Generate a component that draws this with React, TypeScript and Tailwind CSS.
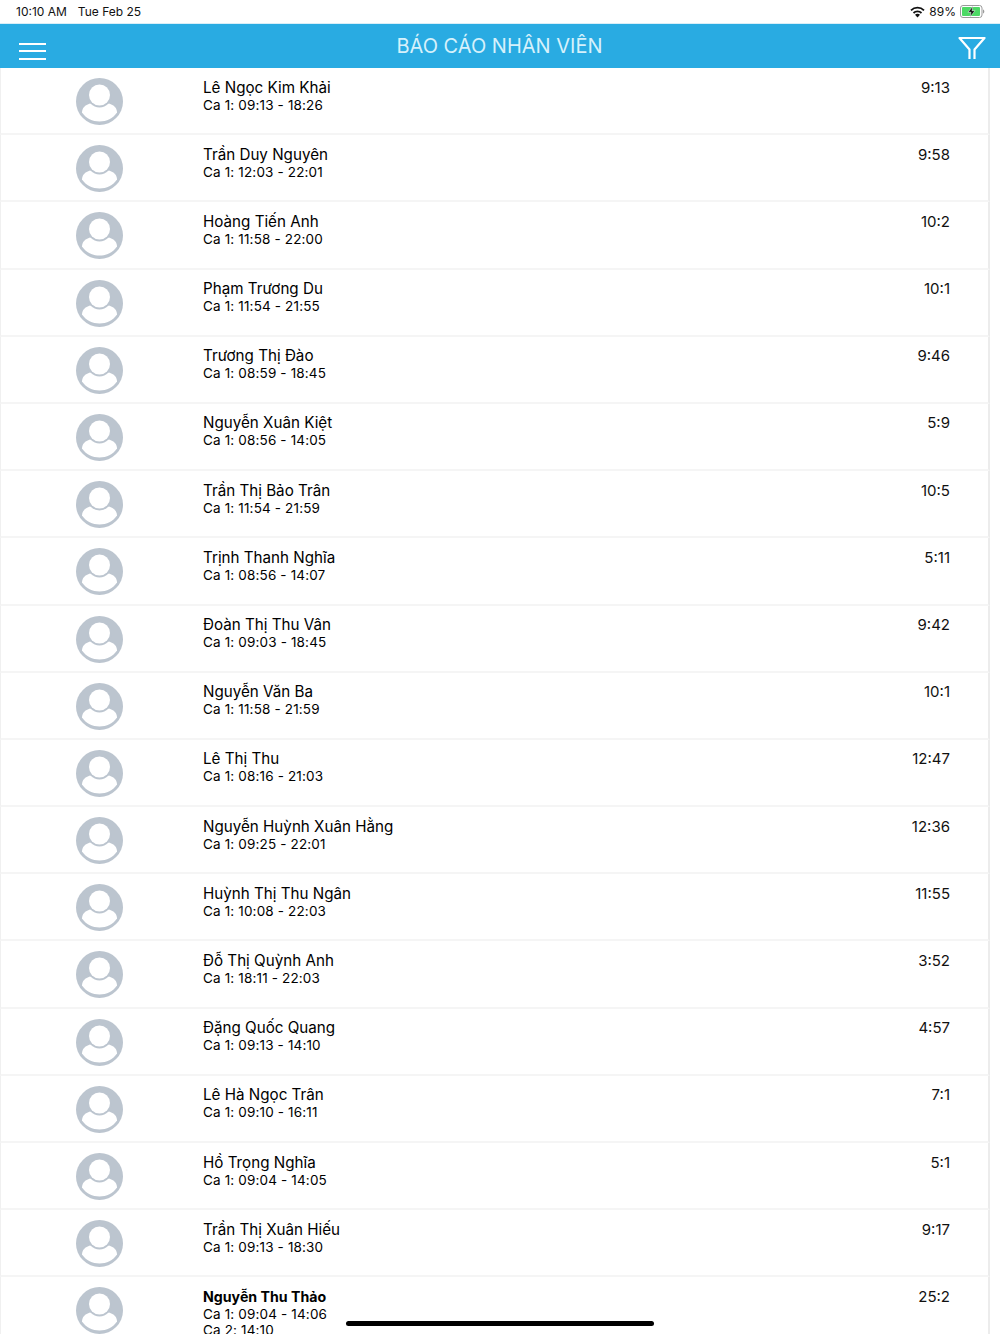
const rows: [string, string, string][] = [
  ["Lê Ngọc Kim Khải", "Ca 1: 09:13 - 18:26", "9:13"],
  ["Trần Duy Nguyên", "Ca 1: 12:03 - 22:01", "9:58"],
  ["Hoàng Tiến Anh", "Ca 1: 11:58 - 22:00", "10:2"],
  ["Phạm Trương Du", "Ca 1: 11:54 - 21:55", "10:1"],
  ["Trương Thị Đào", "Ca 1: 08:59 - 18:45", "9:46"],
  ["Nguyễn Xuân Kiệt", "Ca 1: 08:56 - 14:05", "5:9"],
  ["Trần Thị Bảo Trân", "Ca 1: 11:54 - 21:59", "10:5"],
  ["Trịnh Thanh Nghĩa", "Ca 1: 08:56 - 14:07", "5:11"],
  ["Đoàn Thị Thu Vân", "Ca 1: 09:03 - 18:45", "9:42"],
  ["Nguyễn Văn Ba", "Ca 1: 11:58 - 21:59", "10:1"],
  ["Lê Thị Thu", "Ca 1: 08:16 - 21:03", "12:47"],
  ["Nguyễn Huỳnh Xuân Hằng", "Ca 1: 09:25 - 22:01", "12:36"],
  ["Huỳnh Thị Thu Ngân", "Ca 1: 10:08 - 22:03", "11:55"],
  ["Đỗ Thị Quỳnh Anh", "Ca 1: 18:11 - 22:03", "3:52"],
  ["Đặng Quốc Quang", "Ca 1: 09:13 - 14:10", "4:57"],
  ["Lê Hà Ngọc Trân", "Ca 1: 09:10 - 16:11", "7:1"],
  ["Hồ Trọng Nghĩa", "Ca 1: 09:04 - 14:05", "5:1"],
  ["Trần Thị Xuân Hiếu", "Ca 1: 09:13 - 18:30", "9:17"],
];

function Avatar() {
  return (
    <svg width="47" height="47" viewBox="0 0 47 47" className="block shrink-0">
      <circle cx="23.5" cy="23.5" r="23.5" fill="#bcc5cf" />
      <path d="M6 34.500C6 30 9 27 14 25.500C18 24.500 29 24.500 33 25.500C38 27 41 30 41 34.500C37 40.500 30.500 43.500 23.500 43.500C16.500 43.500 10 40.500 6 34.500Z" fill="#fff" />
      <circle cx="23.5" cy="17" r="12.5" fill="#bcc5cf" />
      <circle cx="23.5" cy="17" r="10.5" fill="#fff" />
    </svg>
  );
}

function Row({ name, lines, time, bold }: { name: string; lines: string[]; time: string; bold?: boolean }) {
  return (
    <div className="mr-[10px] flex h-[67.2px] shrink-0 border-b-2 border-r-2 border-l border-[#f5f5f5] border-r-[#ececec] border-l-[#f0f0f0]">
      <div className="w-[202px] shrink-0 pl-[75px] pt-[10px]">
        <Avatar />
      </div>
      <div className="flex-1 pt-[10.5px] text-black">
        <div className={`leading-[18px] ${bold ? "text-[14.2px] font-bold" : "text-[15.2px]"}`}>{name}</div>
        {lines.map((l) => (
          <div key={l} className="text-[13.5px] leading-[16.500px] tracking-[0.15px]">{l}</div>
        ))}
      </div>
      <div className="pt-[10.5px] pr-[38px] text-[15px] leading-[18px] text-[#111]">{time}</div>
    </div>
  );
}

export default function App() {
  return (
    <div className="relative h-[1334px] w-[1000px] overflow-hidden bg-white font-['Inter','Liberation_Sans',sans-serif]">
      <div className="flex h-[23px] items-center justify-between pl-[16px] pr-[15px] text-[#111]">
        <div className="flex gap-[11px] text-[12px]">
          <span>10:10 AM</span>
          <span>Tue Feb 25</span>
        </div>
        <div className="flex items-center gap-[4px] text-[12px]">
          <svg width="15" height="12" viewBox="0 0 15 12">
            <path d="M7.500 11.500 5 8.800a3.400 3.400 0 0 1 5 0Z" fill="#111" />
            <path d="M3.500 7a5.700 5.700 0 0 1 8 0M1 4.300a9.200 9.200 0 0 1 13 0" fill="none" stroke="#111" strokeWidth="1.800" />
          </svg>
          <span>89%</span>
          <svg width="25" height="13" viewBox="0 0 25 13">
            <rect x="0.5" y="0.5" width="21.500" height="12" rx="2.500" fill="none" stroke="#9a9a9a" />
            <rect x="2" y="2" width="18" height="9" rx="1" fill="#4cd964" />
            <path d="M23 4.500v4c.8-.3 1.300-1 1.300-2S23.800 4.800 23 4.500Z" fill="#9a9a9a" />
            <path d="M13 1 8 7.300h3L10 12l5-6.300h-3Z" fill="#111" stroke="#fff" strokeWidth="0.500" />
          </svg>
        </div>
      </div>
      <div className="flex h-[45px] items-center justify-between border-t border-[#d8eef8] bg-[#29abe2] pl-[19px] pr-[14px]">
        <div className="flex w-[27px] translate-y-[5px] flex-col gap-[5.500px]">
          <div className="h-[2px] bg-white" />
          <div className="h-[2px] bg-white" />
          <div className="h-[2px] bg-white" />
        </div>
        <div className="-translate-x-[2.500px] text-[20px] text-[#d6f1fb]">BÁO CÁO NHÂN VIÊN</div>
        <svg width="28" height="22" viewBox="0 0 28 22" className="translate-y-[2px]">
          <path d="M11.500 22V12.500L1.500 1H26.500L16.500 12.500V22" fill="none" stroke="#fff" strokeWidth="2.200" strokeLinejoin="round" />
        </svg>
      </div>
      <div className="flex flex-col">
        {rows.map(([n, l, t]) => (
          <Row key={n} name={n} lines={[l]} time={t} />
        ))}
        <Row name="Nguyễn Thu Thảo" lines={["Ca 1: 09:04 - 14:06", "Ca 2: 14:10"]} time="25:2" bold />
      </div>
      <div className="absolute bottom-[8px] left-[346px] h-[5px] w-[308px] rounded-full bg-black" />
    </div>
  );
}
